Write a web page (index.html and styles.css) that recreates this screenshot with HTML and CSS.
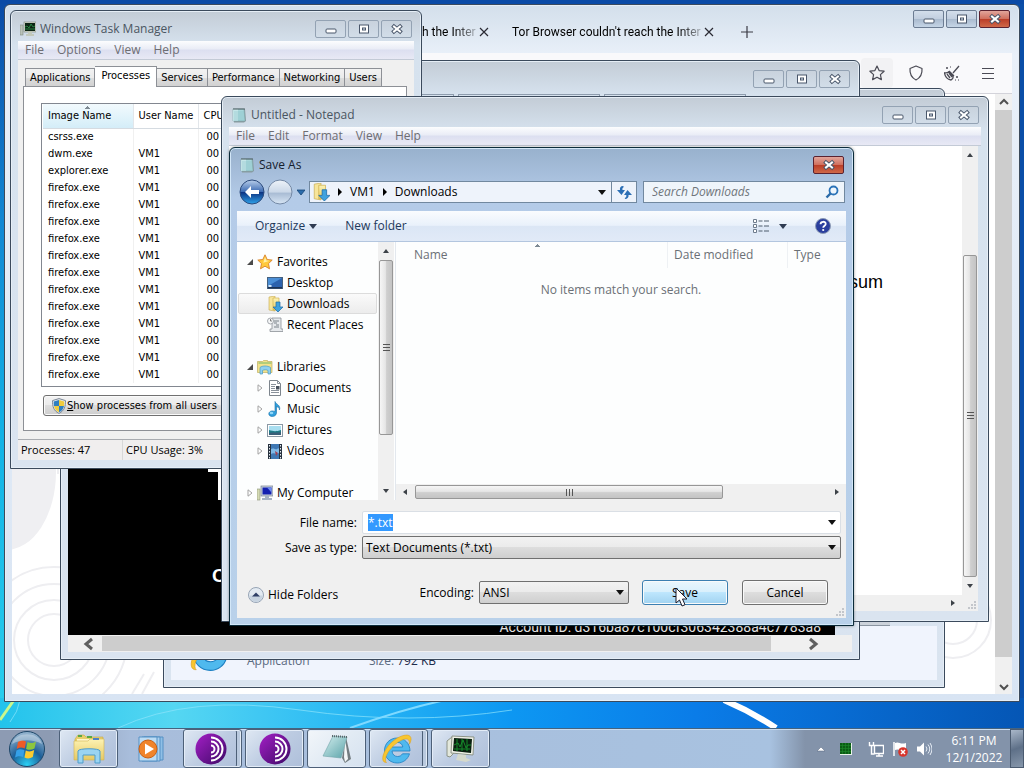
FILE: index.html
```html
<!DOCTYPE html>
<html lang="en">

<head>
    <meta charset="UTF-8">
    <meta name="viewport" content="width=device-width, initial-scale=1.0">
    <title>Save As</title>
    <link rel="stylesheet" href="styles.css">
</head>

<body>
    <!-- shared icons -->
    <svg class="defs" aria-hidden="true">
        <defs>
            <linearGradient id="g-blue" x1="0" y1="0" x2="0" y2="1">
                <stop offset="0" stop-color="#b9cfea" />
                <stop offset=".48" stop-color="#3f6db4" />
                <stop offset=".52" stop-color="#0d3584" />
                <stop offset="1" stop-color="#2fa3ea" />
            </linearGradient>
            <linearGradient id="g-grey" x1="0" y1="0" x2="0" y2="1">
                <stop offset="0" stop-color="#eef3f9" />
                <stop offset=".5" stop-color="#cbd8e8" />
                <stop offset=".55" stop-color="#a9bcd4" />
                <stop offset="1" stop-color="#d8e6f5" />
            </linearGradient>
            <linearGradient id="g-purple" x1="0" y1="0" x2="1" y2="1">
                <stop offset="0" stop-color="#a41fc6" />
                <stop offset="1" stop-color="#3d0a66" />
            </linearGradient>
            <linearGradient id="g-pad" x1="0" y1="0" x2="1" y2="1">
                <stop offset="0" stop-color="#d5efef" />
                <stop offset="1" stop-color="#5aa3a9" />
            </linearGradient>
            <linearGradient id="g-folder" x1="0" y1="0" x2="0" y2="1">
                <stop offset="0" stop-color="#fdf3b4" />
                <stop offset="1" stop-color="#e6c963" />
            </linearGradient>
            <radialGradient id="g-orb" cx=".5" cy=".95" r=".9">
                <stop offset="0" stop-color="#2ad0f5" />
                <stop offset=".5" stop-color="#1d5f98" />
                <stop offset="1" stop-color="#8fb0cc" />
            </radialGradient>
        </defs>
        <symbol id="i-min" viewBox="0 0 12 12">
            <rect x="1" y="6" width="10" height="4" rx="1" fill="#fff" stroke="#49566a" />
        </symbol>
        <symbol id="i-max" viewBox="0 0 12 12">
            <rect x="1.500" y="2" width="9" height="8" fill="#fff" stroke="#49566a" />
            <rect x="4.500" y="5" width="3" height="2" fill="#dfe8f2" stroke="#49566a" />
        </symbol>
        <symbol id="i-close" viewBox="0 0 12 12">
            <path d="M3 3.500l6 5M9 3.500l-6 5" stroke="#49566a" stroke-width="4" stroke-linecap="square" />
            <path d="M3 3.500l6 5M9 3.500l-6 5" stroke="#fff" stroke-width="2" stroke-linecap="square" />
        </symbol>
        <symbol id="i-x" viewBox="0 0 10 10">
            <path d="M1 1l8 8M9 1l-8 8" stroke="#2a2a33" stroke-width="1.200" fill="none" />
        </symbol>
        <symbol id="i-notepad" viewBox="0 0 16 16">
            <path d="M3 2h11l1 12-2 1.500H3z" fill="#8a9ba0" />
            <path d="M2 2h11l1 12H2z" fill="#a9d8dc" stroke="#7ba4aa" stroke-width=".6" />
            <path d="M2 2h5v12H2z" fill="#d3eef0" opacity=".7" />
            <path d="M3 5h10M3 7h10M3 9h10M3 11h10M3 13h10" stroke="#86bfc6" stroke-width=".6" />
            <path d="M3 3V1M5 3V1M7 3V1M9 3V1M11 3V1M13 3V1" stroke="#4d5a5e" />
        </symbol>
        <symbol id="i-taskmgr" viewBox="0 0 16 16">
            <rect x="0" y="4" width="3" height="10" fill="#b9c2b8" stroke="#7f8a80" stroke-width=".6" />
            <rect x="4" y="1" width="12" height="10" fill="#d9ddd0" stroke="#7c8579" stroke-width=".6" />
            <rect x="5" y="2" width="10" height="8" fill="#0c2413" />
            <path d="M5 6l2-1 2 2 2-4 2 3 2-1M5 8h10" stroke="#2f9b4b" stroke-width=".8" fill="none" />
            <path d="M8 11h4v2h2v2H6v-2h2z" fill="#c3c9bb" />
        </symbol>
        <symbol id="i-downloads" viewBox="0 0 16 16">
            <path d="M2 1l6-1v15l-6-1z" fill="#f7e59a" stroke="#c6a94d" stroke-width=".6" />
            <path d="M6 2h6v12H6z" fill="url(#g-folder)" stroke="#caa944" stroke-width=".6" />
            <path d="M9 6h4v5h3l-5 5-5-5h3z" fill="#3fa2de" stroke="#1c6ba8" stroke-width=".7" />
        </symbol>
        <symbol id="i-star" viewBox="0 0 16 16">
            <path d="M8 .8l2.200 4.700 5 .6-3.700 3.500 1 5.200L8 12.200l-4.500 2.600 1-5.200L.8 6.100l5-.6z" fill="#ffc93c" stroke="#d9822b" stroke-width=".9" />
            <path d="M8 3l1.400 3.400 3.300.3-6.400 2z" fill="#fff0a8" />
        </symbol>
        <symbol id="i-desktop" viewBox="0 0 16 16">
            <rect x=".5" y="2.500" width="15" height="11" fill="#2c62ad" stroke="#45617f" />
            <path d="M1 3h14L1 11z" fill="#4b8fd6" />
            <rect x="1" y="12" width="14" height="1.500" fill="#1d3355" />
            <rect x="1.500" y="10" width="3" height="2" fill="#cfe6fa" />
        </symbol>
        <symbol id="i-recent" viewBox="0 0 16 16">
            <path d="M5 1h9v11h2v2.500H3V12h2z" fill="#e6e9ec" stroke="#8b9197" stroke-width=".8" />
            <path d="M7 4h5M7 6h3M9 8h3M7 10h5" stroke="#7b8289" />
            <circle cx="3.500" cy="4" r="3" fill="#f5f7f8" stroke="#90969c" stroke-width=".8" />
            <path d="M3.500 2v2h1.500" stroke="#666" stroke-width=".8" fill="none" />
        </symbol>
        <symbol id="i-libraries" viewBox="0 0 16 16">
            <path d="M.5 2.500h5l1-1h4v1h4.500v11H.5z" fill="#f3e28b" stroke="#bfae5f" stroke-width=".7" />
            <path d="M1.500 4h13" stroke="#73b96a" />
            <path d="M3 8.500c2-2 8-2 10.500 0V15H11v-3.500c-1.500-1-4-1-5.500 0V15H3z" fill="#8fd0ef" stroke="#4a9bc4" stroke-width=".7" />
        </symbol>
        <symbol id="i-documents" viewBox="0 0 16 16">
            <path d="M2.500.5h8l3 3v12h-11z" fill="#fff" stroke="#7d858d" />
            <path d="M10.500.5v3h3M4 4.500h5M4 6.500h4M4 8.500h4M4 10.500h8M4 12.500h8" stroke="#8a929b" fill="none" />
            <rect x="9" y="6" width="3.500" height="3.500" fill="#49525e" />
        </symbol>
        <symbol id="i-music" viewBox="0 0 16 16">
            <path d="M8 .5c1 3 6 3.500 4.500 8.500C12.500 6 10 6 9.500 5.500V12c-.2 3-3.500 4-5.700 3.300-3-1-2.500-4.600.7-5.300 1.500-.3 2.500.2 3.500.6z" fill="#2f9fdc" stroke="#1a6ea8" stroke-width=".6" />
            <ellipse cx="4.500" cy="12" rx="1.800" ry="1.200" fill="#8fd6f8" />
        </symbol>
        <symbol id="i-pictures" viewBox="0 0 16 16">
            <rect x=".5" y="2.500" width="15" height="12" fill="#fff" stroke="#8b99a5" />
            <rect x="2" y="4" width="12" height="9" fill="#a8def0" />
            <path d="M2 8c4 1 6 2 12 0v5H2z" fill="#1f7d88" />
            <path d="M2 11c5-1 8 0 12-1v3H2z" fill="#3a5f79" />
        </symbol>
        <symbol id="i-videos" viewBox="0 0 16 16">
            <rect x="1" y="1" width="14" height="15" fill="#27323f" />
            <rect x="4" y="1" width="8" height="15" fill="#3f78b3" />
            <path d="M4 6c3-2 5 2 8-1v5c-3 2-5-1-8 1z" fill="#7fb9e6" />
            <path d="M8 8l3 2-2 3z" fill="#a33f4f" />
            <path d="M2.500 2v14M13.500 2v14" stroke="#e6edf3" stroke-dasharray="1.500 1.500" />
        </symbol>
        <symbol id="i-computer" viewBox="0 0 16 16">
            <rect x="0" y="4" width="3" height="11" fill="#d5dbb4" stroke="#8c9478" stroke-width=".6" />
            <rect x="4" y="1" width="12" height="10" fill="#c9d2dd" stroke="#75808f" stroke-width=".7" />
            <rect x="5.500" y="2.500" width="9" height="7" fill="#1420b0" />
            <path d="M10 2.500h4.500v5z" fill="#6d8bf0" />
            <path d="M8 11h4v2h3v2H5v-2h3z" fill="#a6b2c4" />
        </symbol>
        <symbol id="i-shield" viewBox="0 0 16 16">
            <path d="M8 .6l6.500 2c0 6-1 10-6.500 12.800C2.500 12.600 1.500 8.600 1.500 2.600z" fill="#e9edf2" stroke="#7a8695" />
            <path d="M8 2v6H3C2.700 6.500 2.700 5 2.700 3.500z" fill="#2f7fc1" />
            <path d="M8 2v6h5c.3-1.500.3-3 .3-4.500z" fill="#f0cc3f" />
            <path d="M8 8H3c.6 3 2 4.900 5 6.300z" fill="#f0cc3f" />
            <path d="M8 8h5c-.6 3-2 4.900-5 6.300z" fill="#2f7fc1" />
        </symbol>
        <symbol id="i-onion" viewBox="0 0 32 32">
            <circle cx="16" cy="16" r="15.500" fill="url(#g-purple)" />
            <path d="M16 4.500a11.500 11.500 0 010 23M16 8.500a7.500 7.500 0 010 15M16 12.500a3.500 3.500 0 010 7" fill="none" stroke="#fff" stroke-width="2" />
        </symbol>
        <symbol id="i-ie" viewBox="0 0 32 32">
            <path d="M29 18H11c.3 3.500 2.500 5.500 5.500 5.500 2.300 0 4-1 5-2.700h7C26.800 26.500 22 30 16.300 30 9 30 3.500 24.600 3.500 17.500S9 5 16.300 5 29 10.500 29 18zM11 14h10.800c-.5-3-2.500-4.600-5.400-4.600S11.600 11 11 14z" fill="#4fb9ee" stroke="#1c7fc2" stroke-width=".8" />
            <path d="M5.500 29.500C-2 30 2 15 14 6.500 22 1 31 0 30 7c-.2 1.500-.8 3-1.600 4.300C29 6 26 4.500 20 7.500 11 12 4 22 4.500 27c.1 1.200.3 1.900 1 2.500z" fill="#f8c630" stroke="#d99a1a" stroke-width=".5" />
        </symbol>
        <symbol id="i-scroll-up" viewBox="0 0 8 8">
            <path d="M1 6l3-4 3 4z" fill="#3d4248" />
        </symbol>
        <symbol id="i-crumb" viewBox="0 0 8 8">
            <path d="M2 0l4 4-4 4z" fill="#000" />
        </symbol>
        <symbol id="i-open" viewBox="0 0 8 8">
            <path d="M7 1v6H1z" fill="#4a4a4a" />
        </symbol>
        <symbol id="i-shut" viewBox="0 0 8 8">
            <path d="M2 .8L6 4 2 7.200z" fill="#fff" stroke="#a3a3a3" />
        </symbol>
        <symbol id="i-grip" viewBox="0 0 9 9">
            <path d="M7 1h2v2H7zM7 4h2v2H7zM7 7h2v2H7zM4 4h2v2H4zM4 7h2v2H4zM1 7h2v2H1z" fill="#c3c6cb" />
        </symbol>
    </svg>

    <main class="desktop">
        <svg class="streaks" viewBox="0 0 1024 40" preserveAspectRatio="none" aria-hidden="true">
            <path d="M0 32L14 12" stroke="#c9f78c" stroke-width="3" />
            <path d="M10 34Q18 24 20 12M118 40Q190 6 300 22T512 22" stroke="#8fe4fb" fill="none" opacity=".7" />
            <path d="M350 40Q400 22 445 12" stroke="#7fd9ff" stroke-width="2" fill="none" />
            <path d="M724 12Q752 24 776 40" stroke="#fff" stroke-width="6" fill="none" />
        </svg>

        <!-- Tor Browser -->
        <section class="window browser" aria-label="Tor Browser">
            <header class="titlebar tabstrip">
                <div class="tab"><span>Tor Browser couldn't reach the Inter</span>
                    <button class="plain" aria-label="Close tab"><svg class="s10"><use href="#i-x" /></svg></button></div>
                <div class="tab"><span>Tor Browser couldn't reach the Inter</span>
                    <button class="plain" aria-label="Close tab"><svg class="s10"><use href="#i-x" /></svg></button></div>
                <button class="plain new-tab" aria-label="New tab"><svg class="s12" viewBox="0 0 12 12"><path d="M6 0v12M0 6h12" stroke="#3a3a44" stroke-width="1.200" /></svg></button>
                <div class="caption-buttons solid">
                    <button aria-label="Minimize"><svg class="s12"><use href="#i-min" /></svg></button>
                    <button aria-label="Maximize"><svg class="s12"><use href="#i-max" /></svg></button>
                    <button class="red" aria-label="Close"><svg class="s12"><use href="#i-close" /></svg></button>
                </div>
            </header>
            <div class="browser-tools">
                <button class="plain shaded" aria-label="Bookmark"><svg class="s16" viewBox="0 0 16 16"><path d="M8 1l2.100 4.600 5 .6-3.700 3.400 1 5L8 12.200l-4.400 2.400 1-5L.9 6.200l5-.6z" fill="none" stroke="#4b4b55" stroke-width="1.200" stroke-linejoin="round" /></svg></button>
                <button class="plain" aria-label="Security level"><svg class="s16" viewBox="0 0 16 16"><path d="M8 1l6 2.500c.4 5-1.200 9-6 11.500C3.200 12.500 1.600 8.500 2 3.500z" fill="none" stroke="#4b4b55" stroke-width="1.200" stroke-linejoin="round" /></svg></button>
                <button class="plain" aria-label="New identity"><svg class="s16" viewBox="0 0 16 16"><path d="M15 1L9 8M5 6l5 5M4.500 7c-1 1-2.500 1-4 .8C1 12 3.500 14.500 7 15c1.500-1 2.500-2.500 2-4zM3 9l3 4M5 8l3 4" fill="none" stroke="#4b4b55" stroke-width="1.300" /><path d="M2 3h2M3 2v2M6 2h1M12 12h2M13 11v2M11 15h1M14 15h1" stroke="#4b4b55" /></svg></button>
                <button class="plain" aria-label="Menu"><svg class="s16" viewBox="0 0 16 16"><path d="M2 3.500h12M2 8.500h12M2 13.500h12" stroke="#4b4b55" stroke-width="1.200" /></svg></button>
            </div>
            <div class="browser-body">
                <div class="page">
                    <svg class="rings" viewBox="0 0 200 240" aria-hidden="true">
                        <ellipse cx="-6" cy="18" rx="50" ry="78" fill="#efeff2" />
                        <g fill="none" stroke="#eeeef1" stroke-width="2">
                            <circle cx="42" cy="186" r="26" />
                            <circle cx="42" cy="186" r="40" />
                            <circle cx="42" cy="186" r="56" />
                            <circle cx="42" cy="186" r="73" />
                            <path d="M46 0v20M120 240l12-20M130 240l12-22" />
                        </g>
                    </svg>
                    <svg class="rings" viewBox="0 0 200 240" aria-hidden="true">
                        <g fill="none" stroke="#eeeef1" stroke-width="2">
                            <circle cx="158" cy="166" r="24" />
                            <circle cx="158" cy="166" r="38" />
                        </g>
                    </svg>
                </div>
                <div class="flat-bar vertical">
                    <svg class="s10" viewBox="0 0 10 10"><path d="M1 7l4-4 4 4" fill="none" stroke="#505050" stroke-width="2" /></svg>
                    <div class="thumb"></div>
                    <svg class="s10" viewBox="0 0 10 10"><path d="M1 3l4 4 4-4" fill="none" stroke="#505050" stroke-width="2" /></svg>
                </div>
            </div>
        </section>

        <!-- Explorer -->
        <section class="window explorer" aria-label="Explorer">
            <div class="explorer-list"></div>
            <div class="explorer-scroll"></div>
            <div class="details">
                <svg class="s42"><use href="#i-ie" /></svg>
                <span class="kind">Application</span>
                <span class="size">Size: <b>792 KB</b></span>
            </div>
        </section>

        <!-- Ransom note -->
        <section class="window note" aria-label="Internet Explorer">
            <header class="titlebar">
                <div class="caption-buttons">
                    <button aria-label="Minimize"><svg class="s12"><use href="#i-min" /></svg></button>
                    <button aria-label="Maximize"><svg class="s12"><use href="#i-max" /></svg></button>
                    <button aria-label="Close"><svg class="s12"><use href="#i-close" /></svg></button>
                </div>
            </header>
            <div class="note-address"><i></i><i></i><i></i></div>
            <div class="note-page">
                <div class="note-frame"></div>
                <h2>C</h2>
                <p>Account ID: d316ba87c100cf306342388a4c7783a8</p>
            </div>
            <div class="flat-bar horizontal">
                <svg class="s14" viewBox="0 0 14 14"><path d="M10 2L4 7l6 5" fill="none" stroke="#606060" stroke-width="3" /></svg>
                <div class="thumb"></div>
                <svg class="s14" viewBox="0 0 14 14"><path d="M4 2l6 5-6 5" fill="none" stroke="#606060" stroke-width="3" /></svg>
            </div>
        </section>

        <!-- Task Manager -->
        <section class="window taskmgr" aria-label="Windows Task Manager">
            <header class="titlebar">
                <svg class="s16"><use href="#i-taskmgr" /></svg>
                <h1>Windows Task Manager</h1>
                <div class="caption-buttons">
                    <button aria-label="Minimize"><svg class="s12"><use href="#i-min" /></svg></button>
                    <button aria-label="Maximize"><svg class="s12"><use href="#i-max" /></svg></button>
                    <button aria-label="Close"><svg class="s12"><use href="#i-close" /></svg></button>
                </div>
            </header>
            <nav class="menubar">
                <button>File</button><button>Options</button><button>View</button><button>Help</button>
            </nav>
            <div class="taskmgr-body">
                <div class="tabs" role="tablist">
                    <button role="tab">Applications</button>
                    <button role="tab" class="active" aria-selected="true">Processes</button>
                    <button role="tab">Services</button>
                    <button role="tab">Performance</button>
                    <button role="tab">Networking</button>
                    <button role="tab">Users</button>
                </div>
                <div class="tab-panel">
                    <div class="table-frame">
                        <table>
                            <thead>
                                <tr><th class="col-image">Image Name</th><th class="col-user">User Name</th><th>CPU</th></tr>
                            </thead>
                            <tbody>
                                <tr><td>csrss.exe</td><td></td><td>00</td></tr>
                                <tr><td>dwm.exe</td><td>VM1</td><td>00</td></tr>
                                <tr><td>explorer.exe</td><td>VM1</td><td>00</td></tr>
                                <tr><td>firefox.exe</td><td>VM1</td><td>00</td></tr>
                                <tr><td>firefox.exe</td><td>VM1</td><td>00</td></tr>
                                <tr><td>firefox.exe</td><td>VM1</td><td>00</td></tr>
                                <tr><td>firefox.exe</td><td>VM1</td><td>00</td></tr>
                                <tr><td>firefox.exe</td><td>VM1</td><td>00</td></tr>
                                <tr><td>firefox.exe</td><td>VM1</td><td>00</td></tr>
                                <tr><td>firefox.exe</td><td>VM1</td><td>00</td></tr>
                                <tr><td>firefox.exe</td><td>VM1</td><td>00</td></tr>
                                <tr><td>firefox.exe</td><td>VM1</td><td>00</td></tr>
                                <tr><td>firefox.exe</td><td>VM1</td><td>00</td></tr>
                                <tr><td>firefox.exe</td><td>VM1</td><td>00</td></tr>
                                <tr><td>firefox.exe</td><td>VM1</td><td>00</td></tr>
                            </tbody>
                        </table>
                    </div>
                    <button class="push all-users"><svg class="s16"><use href="#i-shield" /></svg><span><u>S</u>how processes from all users</span></button>
                </div>
                <footer class="statusbar"><span>Processes: 47</span><span>CPU Usage: 3%</span></footer>
            </div>
        </section>

        <!-- Notepad -->
        <section class="window notepad" aria-label="Untitled - Notepad">
            <header class="titlebar">
                <svg class="s16"><use href="#i-notepad" /></svg>
                <h1>Untitled - Notepad</h1>
                <div class="caption-buttons">
                    <button aria-label="Minimize"><svg class="s12"><use href="#i-min" /></svg></button>
                    <button aria-label="Maximize"><svg class="s12"><use href="#i-max" /></svg></button>
                    <button aria-label="Close"><svg class="s12"><use href="#i-close" /></svg></button>
                </div>
            </header>
            <nav class="menubar">
                <button>File</button><button>Edit</button><button>Format</button><button>View</button><button>Help</button>
            </nav>
            <div class="notepad-body">
                <div class="notepad-text">sum</div>
                <div class="bar vertical">
                    <svg class="s8"><use href="#i-scroll-up" /></svg>
                    <div class="thumb"><i></i></div>
                    <svg class="s8 flip"><use href="#i-scroll-up" /></svg>
                </div>
                <div class="bar horizontal"><svg class="s8 right"><use href="#i-scroll-up" /></svg></div>
                <div class="corner"><svg class="s9"><use href="#i-grip" /></svg></div>
            </div>
        </section>

        <!-- Save As -->
        <section class="window active saveas" role="dialog" aria-label="Save As">
            <header class="titlebar">
                <svg class="s16"><use href="#i-notepad" /></svg>
                <h1>Save As</h1>
                <div class="caption-buttons">
                    <button class="red" aria-label="Close"><svg class="s12"><use href="#i-close" /></svg></button>
                </div>
            </header>
            <div class="navrow">
                <button class="plain" aria-label="Back"><svg class="s26" viewBox="0 0 26 26"><circle cx="13" cy="13" r="12" fill="url(#g-blue)" stroke="#2c4a7c" /><path d="M12 7l-6 6 6 6v-4h8v-4h-8z" fill="#fff" /></svg></button>
                <button class="plain" aria-label="Forward"><svg class="s26" viewBox="0 0 26 26"><circle cx="13" cy="13" r="12" fill="url(#g-grey)" stroke="#7388a5" /></svg></button>
                <button class="plain recent" aria-label="Recent locations"><svg class="s8" viewBox="0 0 8 8"><path d="M0 2h8L4 7z" fill="#2c6cab" stroke="#174679" stroke-width=".8" /></svg></button>
                <div class="address">
                    <svg class="s18"><use href="#i-downloads" /></svg>
                    <svg class="s8"><use href="#i-crumb" /></svg>
                    <a href="#">VM1</a>
                    <svg class="s8"><use href="#i-crumb" /></svg>
                    <a href="#">Downloads</a>
                    <button class="plain drop" aria-label="Previous locations"></button>
                    <button class="plain refresh" aria-label="Refresh"><svg class="s16" viewBox="0 0 16 16"><path d="M7 2C4.500 2 3.500 4 4 6H1l4.500 5L9 6H6.500C6.200 4.500 6.500 3.500 8 3z" fill="#2c6fb5" /><path d="M9 15c2.500 0 4-2 3.500-4H16l-4.500-5L8 11h2.300c.2 1.500-.2 2.500-1.500 3z" fill="#2c6fb5" /></svg></button>
                </div>
                <label class="search">
                    <input type="search" placeholder="Search Downloads" aria-label="Search Downloads">
                    <svg class="s14" viewBox="0 0 14 14"><circle cx="8.500" cy="5.500" r="4" fill="#eef6fd" stroke="#2b73b8" stroke-width="1.800" /><path d="M5.500 8.500L1.500 12.500" stroke="#2b6aa8" stroke-width="2.400" /></svg>
                </label>
            </div>
            <div class="dialog">
                <div class="toolbar">
                    <button class="plain organize">Organize</button>
                    <button class="plain">New folder</button>
                    <button class="plain views" aria-label="Change your view"><svg class="s16" viewBox="0 0 16 16"><path d="M.5 1.500h3v3h-3zM.5 6.500h3v3h-3zM.5 11.500h3v3h-3z" fill="#fff" stroke="#6d7b8c" /><path d="M5.500 3h4M11 3h5M5.500 8h4M11 8h5M5.500 13h4M11 13h5" stroke="#4f5c6c" /></svg></button>
                    <button class="plain help" aria-label="Get help"><svg class="s16" viewBox="0 0 16 16"><circle cx="8" cy="8" r="7.500" fill="#2b3f9e" stroke="#8d9bb5" /><path d="M5.500 6.200C5.600 3 10.800 3 10.700 6c0 1.700-2.500 1.700-2.500 3.800" fill="none" stroke="#fff" stroke-width="1.800" /><circle cx="8.200" cy="12" r="1.100" fill="#fff" /></svg></button>
                </div>
                <div class="panes">
                    <ul class="tree">
                        <li><svg class="s8"><use href="#i-open" /></svg><svg class="s16"><use href="#i-star" /></svg>Favorites</li>
                        <li class="child"><svg class="s8"></svg><svg class="s16"><use href="#i-desktop" /></svg>Desktop</li>
                        <li class="child selected"><svg class="s8"></svg><svg class="s16"><use href="#i-downloads" /></svg>Downloads</li>
                        <li class="child"><svg class="s8"></svg><svg class="s16"><use href="#i-recent" /></svg>Recent Places</li>
                        <li class="group"><svg class="s8"><use href="#i-open" /></svg><svg class="s16"><use href="#i-libraries" /></svg>Libraries</li>
                        <li class="child"><svg class="s8"><use href="#i-shut" /></svg><svg class="s16"><use href="#i-documents" /></svg>Documents</li>
                        <li class="child"><svg class="s8"><use href="#i-shut" /></svg><svg class="s16"><use href="#i-music" /></svg>Music</li>
                        <li class="child"><svg class="s8"><use href="#i-shut" /></svg><svg class="s16"><use href="#i-pictures" /></svg>Pictures</li>
                        <li class="child"><svg class="s8"><use href="#i-shut" /></svg><svg class="s16"><use href="#i-videos" /></svg>Videos</li>
                        <li class="group"><svg class="s8"><use href="#i-shut" /></svg><svg class="s16"><use href="#i-computer" /></svg>My Computer</li>
                    </ul>
                    <div class="bar vertical">
                        <svg class="s8"><use href="#i-scroll-up" /></svg>
                        <div class="thumb"><i></i></div>
                        <svg class="s8 flip"><use href="#i-scroll-up" /></svg>
                    </div>
                    <div class="files">
                        <div class="columns"><span>Name</span><span>Date modified</span><span>Type</span></div>
                        <p>No items match your search.</p>
                        <div class="bar horizontal">
                            <svg class="s8 left"><use href="#i-scroll-up" /></svg>
                            <div class="thumb"><i></i></div>
                            <svg class="s8 right"><use href="#i-scroll-up" /></svg>
                        </div>
                    </div>
                </div>
                <form class="fields">
                    <label for="file-name">File name:</label>
                    <div class="combo text"><input type="text" id="file-name" value="*.txt"></div>
                    <label for="file-type">Save as type:</label>
                    <div class="combo"><select id="file-type"><option>Text Documents (*.txt)</option><option>All Files</option></select></div>
                </form>
                <div class="actions">
                    <button class="plain hide-folders"><svg class="s16" viewBox="0 0 16 16"><circle cx="8" cy="8" r="7.500" fill="#e3eaf2" stroke="#97a4b5" /><path d="M1.500 8.500a6.500 6.500 0 0013 0z" fill="#c7d3e0" /><path d="M4 9.500l4-4 4 4z" fill="#2f3f66" /></svg>Hide Folders</button>
                    <label for="encoding">Encoding:</label>
                    <div class="combo"><select id="encoding"><option>ANSI</option><option>Unicode</option><option>UTF-8</option></select></div>
                    <button class="push default">Save</button>
                    <button class="push">Cancel</button>
                </div>
                <svg class="s9 grip"><use href="#i-grip" /></svg>
            </div>
        </section>

        <svg class="cursor" viewBox="0 0 14 20" aria-hidden="true"><path d="M1 1v15l3.500-3 2.500 6 3-1.300-2.500-5.700H12z" fill="#fff" stroke="#1b1b2b" /></svg>
    </main>

    <footer class="taskbar">
        <button class="start" aria-label="Start"><svg class="s38" viewBox="0 0 38 38">
            <circle cx="19" cy="19" r="17.500" fill="url(#g-orb)" stroke="#1d4668" />
            <path d="M10 12c3-2 5-2 8-.5l-1.300 7c-3-1.500-5-1.300-8 .4z" fill="#ee5a27" />
            <path d="M19.500 12c3 1.500 5.500 1.200 8.500-.6l-1.500 7c-3 1.700-5.500 1.900-8.400.5z" fill="#8cc63f" />
            <path d="M8.400 20.500c3-1.700 5-1.800 8-.4l-1.300 7c-3-1.400-5-1.200-8 .4z" fill="#35a0e8" />
            <path d="M17.800 20.600c3 1.400 5.400 1.200 8.400-.5l-1.400 7c-3 1.700-5.400 1.900-8.300.4z" fill="#fccb2f" />
            <path d="M4 14C7 1 31 1 34 14 25 9 13 9 4 14z" fill="#fff" opacity=".35" />
        </svg></button>
        <div class="tasks">
            <button class="task" aria-label="Windows Explorer"><svg class="s36" viewBox="0 0 36 36">
                <path d="M4 8l3-4h6l2 2h17v21H4z" fill="#e8cf6b" stroke="#c8a944" stroke-width=".6" />
                <path d="M6 8h26v20H6z" fill="#fff6c8" />
                <path d="M3 10h14l2-2h14v21H3z" fill="url(#g-folder)" stroke="#d0b450" stroke-width=".6" />
                <path d="M7 5h4M16 6h5" stroke="#59a844" stroke-width="2" />
                <path d="M22 8h6" stroke="#4f82c4" stroke-width="2" />
                <path d="M7 20c0-3 22-3 22 0v12h-5v-8H12v8H7z" fill="#9ad4f2" stroke="#4e9dcb" />
            </svg></button>
            <button class="task bare" aria-label="Windows Media Player"><svg class="s30" viewBox="0 0 30 30">
                <path d="M8 3h19v23H8z" fill="#8fbfe6" stroke="#5590c4" />
                <path d="M6 3h18v24H6z" fill="#a9d0ef" stroke="#5590c4" />
                <path d="M3 3h18v24H3z" fill="#bcdcf4" stroke="#5590c4" />
                <circle cx="12" cy="15" r="9" fill="#f0842b" stroke="#c95f12" />
                <path d="M9 9.500l9 5.500-9 5.500z" fill="#fff" />
            </svg></button>
            <button class="task stacked" aria-label="Tor Browser"><svg class="s32"><use href="#i-onion" /></svg></button>
            <button class="task" aria-label="Tor Browser"><svg class="s32"><use href="#i-onion" /></svg></button>
            <button class="task current" aria-label="Notepad"><svg class="s32" viewBox="0 0 32 32">
                <path d="M25 4l5 22-6 4-3-5z" fill="#737c80" />
                <path d="M24 5l3 21-3 3-1-5z" fill="#f4f7f8" />
                <path d="M12 3l14 1-6 21-18-2z" fill="url(#g-pad)" stroke="#6fa3a8" stroke-width=".6" />
                <path d="M11 3l15 1" stroke="#596468" stroke-width="2" stroke-dasharray="1 1" />
            </svg></button>
            <button class="task stacked" aria-label="Internet Explorer"><svg class="s32"><use href="#i-ie" /></svg></button>
            <button class="task" aria-label="Task Manager"><svg class="s32" viewBox="0 0 32 32">
                <path d="M2 8l5-4 3 1v14l-5 5-3-1z" fill="#e3e8dc" stroke="#8d9488" />
                <path d="M7 3l22 1-1 18-22-2z" fill="#eef0e6" stroke="#8d9488" />
                <path d="M9 5l18 1-1 14-18-2z" fill="#0a1f10" />
                <path d="M9 12l4-2 2 4 3-7 3 8 2-3h3M9 16h16M12 6v12M17 6v12M22 6v12" stroke="#158a2a" fill="none" />
                <path d="M13 21l8 1v3l5 2-5 2-10-2z" fill="#d5d9cc" />
            </svg></button>
        </div>
        <div class="tray">
            <svg class="s10" viewBox="0 0 10 10"><path d="M1 7l4-4 4 4z" fill="#fff" stroke="#55657c" stroke-width=".5" /></svg>
            <svg class="s12 cpu" viewBox="0 0 12 12"><rect width="12" height="12" fill="#e8f3e8" /><rect width="11" height="11" fill="#0a5c14" /><path d="M0 2.500h11M0 5.500h11M0 8.500h11M2.500 0v11M5.500 0v11M8.500 0v11" stroke="#1f8c2c" stroke-width=".6" /></svg>
            <svg class="s16" viewBox="0 0 16 16"><path d="M6.500 4.500h9v8h-9zM8 15h7M11 12v3" fill="#75869e" stroke="#fff" stroke-width="1.400" /><path d="M1.500 1v3.500h4V1M3.500 4v9h3" fill="none" stroke="#fff" stroke-width="1.400" /></svg>
            <svg class="s16" viewBox="0 0 16 16"><path d="M2 1v14" stroke="#fff" stroke-width="1.500" /><path d="M3 2c4-2 5 2 11 0v7c-5 2-7-2-11 0z" fill="#fff" /><circle cx="11" cy="11" r="4.800" fill="#d8352c" /><path d="M9 9l4 4M13 9l-4 4" stroke="#fff" stroke-width="1.500" /></svg>
            <svg class="s16" viewBox="0 0 16 16"><path d="M1 5.500h3l4-4v13l-4-4H1z" fill="#fff" /><path d="M10 5.500q2 2.500 0 5M12 3.500q3.500 4.500 0 9M14 2q4 6 0 12" fill="none" stroke="#e8eef6" /></svg>
        </div>
        <div class="clock"><time>6:11 PM</time><time>12/1/2022</time></div>
        <button class="show-desktop" aria-label="Show desktop"></button>
    </footer>
    <script src="script.js"></script>
</body>

</html>
```
FILE: styles.css
```css
* {
    box-sizing: border-box;
}

body {
    margin: 0;
    height: 100vh;
    display: flex;
    flex-direction: column;
    overflow: hidden;
    font: 12px/16px "Open Sans", "Noto Sans", sans-serif;
    color: #000;
}

button,
input,
select {
    font: inherit;
    color: inherit;
}

svg {
    display: block;
    flex: none;
}

.defs {
    position: absolute;
    width: 0;
    height: 0;
}

.s8 { width: 8px; height: 8px; }
.s9 { width: 9px; height: 9px; }
.s10 { width: 10px; height: 10px; }
.s12 { width: 12px; height: 12px; }
.s14 { width: 14px; height: 14px; }
.s16 { width: 16px; height: 16px; }
.s18 { width: 18px; height: 18px; }
.s26 { width: 26px; height: 26px; }
.s30 { width: 30px; height: 30px; }
.s32 { width: 32px; height: 32px; }
.s36 { width: 36px; height: 36px; }
.s38 { width: 38px; height: 38px; }
.s42 { width: 42px; height: 42px; }

.flip { transform: rotate(180deg); }
.right { transform: rotate(90deg); }
.left { transform: rotate(-90deg); }

/* desktop */

.desktop {
    position: relative;
    flex: 1;
    overflow: hidden;
    background:
        linear-gradient(to right, #23c3ec 0, #55d7f2 17%, #2ab8f4 34%, #0d97f2 50%, #0a7ce8 68%, #0556b5 100%) bottom / 100% 30px no-repeat,
        linear-gradient(#0a4aa6, #0a4aa6 4px, transparent 4px),
        linear-gradient(to right, transparent 50%, #0a4ea8 50%),
        linear-gradient(#0a4aa6, #1287d3 30%, #12b2e6 60%, #2bd0ee);
}

.streaks {
    position: absolute;
    left: 0;
    bottom: 0;
    width: 100%;
    height: 40px;
}

/* window frames */

.window {
    position: absolute;
    display: flex;
    flex-direction: column;
    padding: 0 7px 7px;
    border: 1px solid #3b4a5c;
    border-radius: 6px 6px 0 0;
    background: linear-gradient(#c3ccd6, #d6e2ee 34px, #dae4f0);
    box-shadow: inset 0 0 0 1px #e6eef6;
}

.window.active {
    border-color: #0b2b3a;
    background: linear-gradient(#98b1cd, #b4cbe8 50px, #b9d1ea);
    box-shadow: inset 0 0 0 1px #d3e7f8, 0 0 3px #0006;
}

.browser {
    left: 4px;
    top: 4px;
    width: 1016px;
    height: 698px;
    background: linear-gradient(#d3dfeb, #e9f0f9 50px, #d8e4f3);
}

.explorer { left: 163px; top: 88px; width: 782px; height: 600px; }
.note { left: 60px; top: 60px; width: 800px; height: 600px; }
.taskmgr { left: 10px; top: 10px; width: 412px; height: 459px; }
.notepad { left: 221px; top: 96px; width: 768px; height: 526px; }
.saveas { left: 229px; top: 147px; width: 625px; height: 479px; }

.titlebar {
    display: flex;
    align-items: center;
    gap: 4px;
    height: 30px;
    padding: 6px 2px 0;
    flex: none;
}

.titlebar h1 {
    margin: 0;
    font-size: 12px;
    font-weight: normal;
    color: #4a5561;
}

.active .titlebar {
    padding-top: 4px;
}

.active .titlebar h1 {
    color: #14202e;
}

.caption-buttons {
    display: flex;
    gap: 2px;
    margin-left: auto;
}

.caption-buttons button {
    width: 31px;
    height: 18px;
    padding: 0;
    display: flex;
    align-items: center;
    justify-content: center;
    border: 1px solid #93a2b3;
    border-radius: 2px;
    background: transparent;
}

.caption-buttons.solid button {
    border-color: #6c7c92;
    background: linear-gradient(#d3deeb, #c1cedf 50%, #a9bace 50%, #c5d5e6);
}

.caption-buttons button.red {
    border-color: #5a2230;
    background: linear-gradient(#e2a59b, #d0705f 48%, #ba3c27 50%, #cf6848);
}

.plain {
    display: flex;
    align-items: center;
    padding: 0;
    border: 0;
    background: none;
}

.menubar {
    display: flex;
    gap: 13px;
    flex: none;
    height: 19px;
    padding: 0 7px;
    border-bottom: 1px solid #c3cad6;
    background: linear-gradient(#fcfdfe, #e9ecf6 45%, #dcdff0 50%, #e8e9f5);
}

.menubar button {
    padding: 0;
    border: 0;
    background: none;
    color: #6d6d72;
}

/* classic scroll bars */

.bar {
    display: flex;
    align-items: center;
    justify-content: space-between;
    background: #f0f0f0;
}

.bar.vertical {
    flex-direction: column;
    width: 16px;
    padding: 5px 0;
}

.bar.horizontal {
    height: 16px;
    padding: 0 5px;
}

.bar .thumb {
    display: flex;
    align-items: center;
    justify-content: center;
    border: 1px solid #979797;
    border-radius: 2px;
}

.bar.vertical .thumb {
    width: 14px;
    background: linear-gradient(to right, #f6f6f6, #e6e6e6 45%, #cfcfcf 55%, #c4c4c4);
}

.bar.horizontal .thumb {
    height: 14px;
    background: linear-gradient(#f6f6f6, #e6e6e6 45%, #cfcfcf 55%, #c4c4c4);
}

.bar .thumb i {
    width: 7px;
    height: 7px;
    background: repeating-linear-gradient(#555 0 1px, transparent 1px 3px);
}

.bar.horizontal .thumb i {
    background: repeating-linear-gradient(to right, #555 0 1px, transparent 1px 3px);
}

.flat-bar {
    display: flex;
    align-items: center;
    background: #f0f0f0;
}

.flat-bar .thumb {
    background: #cdcdcd;
}

/* browser */

.tabstrip {
    height: 48px;
    padding: 0 2px 0 275px;
    gap: 0;
}

.tab {
    width: 225px;
    padding: 6px 0 0;
    display: flex;
    align-items: center;
    gap: 2px;
    font-family: Roboto, "Open Sans", sans-serif;
}

.tab span {
    width: 190px;
    white-space: nowrap;
    -webkit-mask-image: linear-gradient(to right, #000 88%, #0003);
    mask-image: linear-gradient(to right, #000 88%, #0003);
}

.new-tab {
    padding: 6px 0 0 4px;
}

.tabstrip .caption-buttons {
    align-self: flex-start;
    padding-top: 5px;
}

.browser-tools {
    display: flex;
    justify-content: flex-end;
    align-items: center;
    gap: 6px;
    flex: none;
    height: 41px;
    padding: 0 9px;
    border-bottom: 1px solid #d3d3da;
    background: #f9f9fb;
}

.browser-tools button {
    justify-content: center;
    width: 30px;
    height: 30px;
}

.browser-tools .shaded {
    width: 32px;
    margin-right: 2px;
    border-radius: 4px;
    background: #f2f2f4;
}

.browser-body {
    flex: 1;
    display: flex;
    min-height: 0;
}

.page {
    flex: 1;
    display: flex;
    align-items: flex-end;
    justify-content: space-between;
    background: #fff;
}

.rings {
    width: 200px;
    height: 240px;
}

.flat-bar.vertical {
    flex-direction: column;
    gap: 3px;
    width: 17px;
    padding: 3px 0 2px;
}

.flat-bar.vertical .thumb {
    width: 100%;
    flex: 1;
    margin-bottom: 22px;
}

/* explorer */

.explorer-list {
    flex: 1;
}

.explorer-scroll {
    flex: none;
    width: 719px;
    height: 13px;
    border-bottom: 1px solid #8b95a1;
    background: #ccd2da;
}

.details {
    display: flex;
    align-items: flex-end;
    gap: 16px;
    flex: none;
    height: 54px;
    padding: 0 18px 7px;
    background: #f0f4fd;
}

.details span {
    line-height: 24px;
    color: #5a6a80;
}

.details b {
    font-weight: normal;
    color: #1e2b4b;
}

.kind {
    width: 106px;
}

/* ransom note */

.note .titlebar {
    height: 33px;
    padding-top: 2px;
}

.note-address {
    display: flex;
    gap: 4px;
    height: 10px;
}

.note-address i {
    width: 142px;
    border: 1px solid #8e9cad;
}

.note-address i:first-child {
    width: 386px;
}

.note-page {
    flex: 1;
    display: flex;
    flex-direction: column;
    align-items: flex-start;
    width: 767px;
    padding: 364px 14px 0 0;
    overflow: hidden;
    background: #000;
    color: #fff;
}

.note-frame {
    width: 80px;
    height: 33px;
    margin-left: 140px;
    border-top: 4px solid #fff;
    background: linear-gradient(to right, transparent 10px, #fff 10px);
}

.note-page h2 {
    margin: 64px 0 0 144px;
    font: bold 19px/24px "Liberation Sans", sans-serif;
}

.note-page p {
    margin: 31px 0 0;
    align-self: flex-end;
    font: 14px/16px Roboto, sans-serif;
    color: #e4e4e4;
}

.flat-bar.horizontal {
    justify-content: space-between;
    height: 17px;
    padding: 0 32px 0 14px;
    flex: none;
}

.flat-bar.horizontal .thumb {
    flex: 1;
    height: 15px;
    margin: 0 35px 0 6px;
}

/* task manager */

.window.taskmgr {
    padding-bottom: 8px;
}

.taskmgr-body {
    flex: 1;
    display: flex;
    flex-direction: column;
    padding-top: 6px;
    background: #f0f0f0;
    font: 11px/14px "DejaVu Sans Condensed", "Open Sans", sans-serif;
}

.tabs {
    display: flex;
    align-items: flex-end;
    padding: 0 7px;
}

.tabs button {
    height: 18px;
    padding: 0 4px;
    border: 1px solid #8d9096;
    border-bottom: 0;
    border-left-width: 0;
    background: linear-gradient(#f2f2f2, #ebebeb 50%, #dddddd 50%, #d2d2d2);
}

.tabs button:first-child {
    border-left-width: 1px;
}

.tabs .active {
    height: 21px;
    margin-bottom: -1px;
    padding: 0 6px 2px;
    background: #fff;
    z-index: 1;
}

.tab-panel {
    flex: 1;
    margin: 0 7px 8px 5px;
    padding: 16px 17px 14px;
    display: flex;
    flex-direction: column;
    align-items: flex-start;
    gap: 8px;
    border: 1px solid #8d9096;
    background: #fff;
}

.table-frame {
    width: 100%;
    flex: 1;
    padding: 0 1px;
    border: 1px solid #828790;
}

.table-frame table {
    width: 100%;
    table-layout: fixed;
    border-collapse: collapse;
}

.table-frame th {
    height: 24px;
    padding: 1px 5px 0;
    font-weight: normal;
    text-align: left;
    white-space: nowrap;
    border-right: 1px solid #e2e6ea;
    border-bottom: 1px solid #d5dbe1;
}

.table-frame .col-image {
    width: 90px;
    background:
        conic-gradient(from 135deg at 50% 0, #7e8a94 90deg, transparent 0) 50% 2px / 7px 3px no-repeat,
        linear-gradient(#f2fafd, #e3f4fb 50%, #d4edf8);
}

.table-frame .col-user {
    width: 65px;
}

.table-frame td {
    height: 17px;
    padding: 1px 5px 0;
    border-right: 1px solid #f0f0f0;
}

.table-frame td:nth-child(3) {
    padding-left: 8px;
}

.push {
    display: flex;
    align-items: center;
    justify-content: center;
    border: 1px solid #707070;
    border-radius: 3px;
    background: linear-gradient(#f3f3f3, #ebebeb 48%, #dddddd 50%, #cdcdcd);
    box-shadow: inset 0 0 0 1px #fafafa;
}

.all-users {
    height: 21px;
    margin-left: 2px;
    padding: 0 7px;
}

.statusbar {
    display: flex;
    height: 21px;
    border-top: 1px solid #a8abb0;
    background: #f0eeee;
    font: 11px/20px "Open Sans", "Noto Sans", sans-serif;
}

.statusbar span {
    width: 105px;
    padding-left: 3px;
    border-right: 1px solid #d8d8d8;
}

/* notepad */

.notepad-body {
    flex: 1;
    display: grid;
    grid-template-columns: 1fr 16px;
    grid-template-rows: 1fr 16px;
    margin: 0 3px 3px 0;
    background: #fff;
}

.notepad-text {
    padding: 125px 0 0 620px;
    font: 18px/22px "Liberation Sans", sans-serif;
}

.notepad .bar.horizontal {
    justify-content: flex-end;
}

.notepad .bar.vertical .thumb {
    height: 322px;
    margin-top: 90px;
}

.corner,
.grip {
    display: flex;
    align-items: flex-end;
    justify-content: flex-end;
}

.corner {
    padding: 2px;
    background: #f0f0f0;
}

/* save as */

.navrow {
    display: flex;
    align-items: center;
    flex: none;
    height: 33px;
    padding: 0 1px 5px 2px;
}

.navrow > .plain + .plain {
    margin-left: 2px;
}

.navrow .recent {
    padding: 0 4px 0 2px;
}

.address,
.search {
    display: flex;
    align-items: center;
    height: 22px;
    border: 1px solid #71889f;
    background: #eef3fb;
}

.address {
    flex: 1;
    gap: 6px;
    padding-left: 2px;
}

.address a {
    color: #000;
    text-decoration: none;
}

.drop {
    align-self: stretch;
    margin-left: auto;
    padding: 0 5px;
    border-right: 1px solid #71889f;
}

.drop::after,
.organize::after,
.views::after,
.combo::after {
    content: "";
    border: 4px solid transparent;
    border-top: 5px solid #111;
    border-bottom: 0;
}

.address .refresh {
    margin: 0 4px 0 -2px;
}

.search {
    width: 202px;
    margin-left: 6px;
    padding: 0 5px 0 8px;
    background: #eff5fb;
}

.search input {
    flex: 1;
    min-width: 0;
    padding: 0;
    border: 0;
    outline: 0;
    background: none;
}

.search input::placeholder {
    font-style: italic;
    color: #6f757c;
}

.dialog {
    position: relative;
    flex: 1;
    min-height: 0;
    display: flex;
    flex-direction: column;
    background: #f0f0f0;
}

.toolbar {
    display: flex;
    align-items: center;
    gap: 28px;
    flex: none;
    height: 31px;
    padding: 0 15px 0 18px;
    color: #1e395b;
    border-bottom: 1px solid #b3c6df;
    background: linear-gradient(#fafcfe, #e9f1fb 48%, #dbe6f5 50%, #e1eaf7);
}

.organize,
.views {
    gap: 4px;
}

.views {
    gap: 10px;
    margin-left: auto;
}

.organize::after,
.views::after {
    border-top-color: #2f3c52;
}

.panes {
    display: flex;
    flex: none;
    height: 258px;
    background: #fdfefe;
}

.tree {
    width: 141px;
    margin: 0;
    padding: 9px 0 0;
    list-style: none;
}

.tree li {
    display: flex;
    align-items: center;
    height: 21px;
    gap: 4px;
    padding-left: 9px;
    white-space: nowrap;
}

.tree svg:first-child {
    margin-right: -1px;
}

.tree .child {
    margin: 0 1px;
    padding-left: 18px;
}

.tree .group {
    margin-top: 21px;
}

.tree .selected {
    border: 1px solid #dcdcdc;
    border-radius: 2px;
    padding-left: 17px;
    background: linear-gradient(#fafafa, #ececec);
}

.panes .bar.vertical .thumb {
    height: 175px;
    margin-bottom: auto;
    margin-top: 5px;
}

.files {
    flex: 1;
    display: flex;
    flex-direction: column;
    margin-left: 1px;
    border-left: 1px solid #e3e8ee;
    color: #6b7076;
}

.columns {
    display: grid;
    grid-template-columns: 272px 120px 1fr;
    height: 25px;
    background: conic-gradient(from 135deg at 50% 0, #7e8a94 90deg, transparent 0) 138px 2px / 7px 3px no-repeat;
}

.columns span {
    padding: 5px 6px;
    border-right: 1px solid #eef1f4;
}

.columns span:first-child {
    padding-left: 18px;
}

.columns span:last-child {
    border: 0;
}

.files p {
    margin: 15px 0 auto;
    text-align: center;
}

.files .bar.horizontal .thumb {
    width: 308px;
    margin-left: 6px;
    margin-right: auto;
}

.fields {
    display: grid;
    grid-template-columns: 120px 1fr;
    gap: 2px 5px;
    padding: 11px 5px 0 0;
}

.fields label {
    text-align: right;
    line-height: 23px;
}

.combo {
    display: flex;
    align-items: center;
    height: 23px;
    padding-right: 4px;
    border: 1px solid #707070;
    border-radius: 2px;
    background: linear-gradient(#f2f2f2, #ebebeb 48%, #dddddd 50%, #cfcfcf);
}

.combo.text {
    border-color: #dadfe5;
    background: #fff;
}

.combo select,
.combo input {
    flex: 1;
    min-width: 0;
    height: 100%;
    padding: 0 3px;
    border: 0;
    outline: 0;
    background: none;
    appearance: none;
}

.combo input {
    padding-left: 5px;
}

.combo input::selection {
    color: #fff;
    background: #3399ff;
}

.actions {
    display: flex;
    align-items: center;
    padding: 21px 18px 0 11px;
}

.actions .combo {
    width: 150px;
    margin: 0 13px 0 5px;
}

.hide-folders {
    gap: 4px;
    margin-right: auto;
    padding-top: 5px;
}

.actions .push {
    width: 86px;
    height: 25px;
}

.actions .push + .push {
    margin-left: 14px;
}

.push.default {
    border-color: #3c7fb1;
    background: linear-gradient(#eaf6fd, #d9f0fc 48%, #bee6fd 50%, #a0d2f0);
}

.grip {
    position: absolute;
    right: 2px;
    bottom: 2px;
}

.cursor {
    position: absolute;
    left: 675px;
    top: 587px;
    width: 14px;
    height: 20px;
}

/* taskbar */

.taskbar {
    display: flex;
    align-items: stretch;
    height: 40px;
    border-top: 1px solid #45637f;
    background: linear-gradient(to right, #8d9bb3 50px, #a8bddb 130px, #a8c2e0 770px, #8393aa 805px, #8393aa);
    box-shadow: inset 0 1px #c9dcf0;
}

.taskbar button {
    display: flex;
    align-items: center;
    justify-content: center;
    padding: 0;
    border: 0;
    background: none;
}

.taskbar .start {
    width: 54px;
}

.tasks {
    display: flex;
    gap: 3px;
    padding-left: 5px;
}

.tasks .task {
    width: 59px;
    border: 1px solid #4d6078;
    border-radius: 3px;
    background: linear-gradient(135deg, #dfe8f3, #bdcce2 50%, #aebfda);
    box-shadow: inset 0 0 0 1px #e3ecf7;
}

.tasks .bare {
    border-color: transparent;
    background: none;
    box-shadow: none;
}

.tasks .current {
    background: linear-gradient(135deg, #f2f6fa, #e2ebf4 50%, #d5e1ef);
}

.tasks .stacked {
    padding-right: 4px;
    box-shadow: inset 0 0 0 1px #e3ecf7, inset -4px 0 #b9c9de, inset -5px 0 #4d6078;
}

.tray {
    display: flex;
    align-items: center;
    gap: 8px;
    margin-left: auto;
}

.tray .cpu {
    margin: 0 8px 0 6px;
}

.clock {
    display: flex;
    flex-direction: column;
    justify-content: center;
    width: 78px;
    padding-left: 6px;
    text-align: center;
    line-height: 17px;
    color: #fff;
}

.taskbar .show-desktop {
    width: 14px;
    border: 1px solid #4b5b70;
    background: linear-gradient(160deg, #a9b7c9, #5e7088 50%, #8797ab);
}
```
FILE: script.js
```js
const fileName = document.getElementById('file-name');
fileName.focus();
fileName.select();
```
